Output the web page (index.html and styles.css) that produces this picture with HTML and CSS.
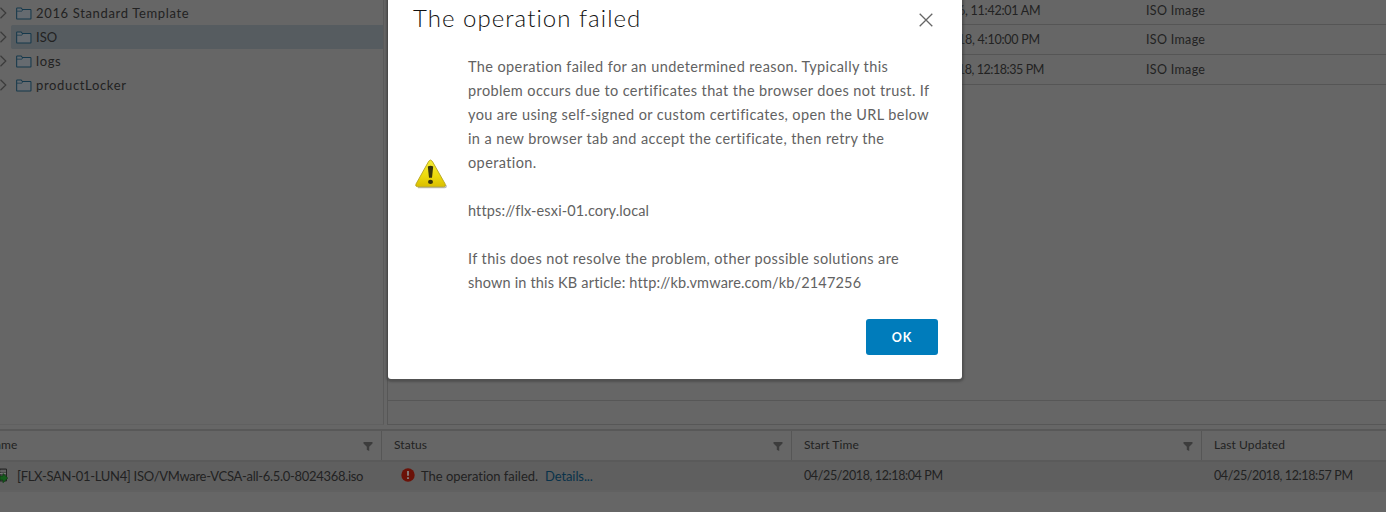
FILE: index.html
```html
<!DOCTYPE html>
<html lang="en">
<head>
<meta charset="utf-8">
<title>Datastore files</title>
<link rel="stylesheet" href="styles.css">
</head>
<body>
<svg class="defs" width="0" height="0">
  <symbol id="folder" viewBox="0 0 17 14"><path d="M.6 12.4V1.7q0-.6.6-.6h4.2l1.4 1.6h8.5q.7 0 .7.7v9q0 .6-.6.6H1.2q-.6 0-.6-.6z" fill="#666b70" stroke="#15384b" stroke-width="1.1"/><path d="M1 4.5h5.2l1-1.6" fill="none" stroke="#15384b" stroke-width=".8"/></symbol>
  <symbol id="caret" viewBox="0 0 7 12"><path d="M.5 .8L5.8 6 .5 11.2" fill="none" stroke="#3b3b3b" stroke-width="1.2"/></symbol>
  <symbol id="filter" viewBox="0 0 10 9"><path d="M.5 0h9v1.5L6.2 4.7V9L3.8 7.7v-3L.5 1.5z" fill="#3c3c3c"/></symbol>
</svg>
<div class="app">
  <div class="workspace">
    <nav class="tree">
      <div class="node"><svg class="caret"><use href="#caret"/></svg><div class="label"><svg class="folder"><use href="#folder"/></svg><span class="node-text">2016 Standard Template</span></div></div>
      <div class="node"><svg class="caret"><use href="#caret"/></svg><div class="label selected"><svg class="folder"><use href="#folder"/></svg><span>ISO</span></div></div>
      <div class="node"><svg class="caret"><use href="#caret"/></svg><div class="label"><svg class="folder"><use href="#folder"/></svg><span class="node-text">logs</span></div></div>
      <div class="node"><svg class="caret"><use href="#caret"/></svg><div class="label"><svg class="folder"><use href="#folder"/></svg><span class="node-text">productLocker</span></div></div>
    </nav>
    <main class="files">
      <div class="file-rows">
        <div class="file first"><span class="modified">6, 11:42:01 AM</span><span>ISO Image</span></div>
        <div class="file"><span class="modified">18, 4:10:00 PM</span><span>ISO Image</span></div>
        <div class="file"><span class="modified long">18, 12:18:35 PM</span><span>ISO Image</span></div>
      </div>
      <div class="files-footer"></div>
    </main>
  </div>
  <section class="tasks">
    <div class="row head">
      <div class="cell name"><span class="cut">Name</span><svg class="filter"><use href="#filter"/></svg></div>
      <div class="cell"><span>Status</span><svg class="filter"><use href="#filter"/></svg></div>
      <div class="cell"><span>Start Time</span><svg class="filter"><use href="#filter"/></svg></div>
      <div class="cell last"><span>Last Updated</span></div>
    </div>
    <div class="row data">
      <div class="cell name"><svg class="task-icon" viewBox="0 0 8 16"><path d="M0 1h6.5v12H0z" fill="#4a4a4a" stroke="#242424"/><path d="M0 3h6M0 5.5h6" stroke="#777"/><path d="M0 8h3V5.5L7.8 10 3 14.8V12H0z" fill="#155c1c" stroke="#0c3b11" stroke-width=".6"/></svg><span class="file-name">[FLX-SAN-01-LUN4] ISO/VMware-VCSA-all-6.5.0-8024368.iso</span></div>
      <div class="cell status"><svg class="error" viewBox="0 0 14 14"><circle cx="7" cy="7" r="6.7" fill="#6b1208"/><path d="M7 3v4.8M7 9.2v1.7" stroke="#8a8a8a" stroke-width="1.7"/></svg><span class="message">The operation failed.</span><a class="details">Details...</a></div>
      <div class="cell time">04/25/2018, 12:18:04 PM</div>
      <div class="cell last time">04/25/2018, 12:18:57 PM</div>
    </div>
  </section>
</div>
<div class="dialog">
  <header class="dialog-head"><h3>The operation failed</h3><svg class="close" viewBox="0 0 14 14"><path d="M.7.7l12.6 12.6M13.3.7L.7 13.3" stroke="#666" stroke-width="1.3"/></svg></header>
  <div class="dialog-body">
    <svg class="warning" viewBox="0 0 32 30"><defs><linearGradient id="gold" x2="0" y2="1"><stop offset="0" stop-color="#f5ed3a"/><stop offset=".6" stop-color="#ecd90b"/><stop offset="1" stop-color="#d9be00"/></linearGradient></defs><path d="M3 28.6h26.5q2.3-.3 1.2-2.4" fill="none" stroke="#bbb" stroke-width="1.5"/><path d="M13.7 2.3Q15.5-.2 17.3 2.3L30.2 25q1 2.6-1.8 2.8H2.7Q0 27.6 1 25z" fill="url(#gold)" stroke="#b7a51c" stroke-width=".9"/><path d="M12.8 7.5q2.7-1.5 5.4 0l-1.2 11.2h-3z" fill="#38340b"/><ellipse cx="15.5" cy="22.9" rx="2.5" ry="2.1" fill="#38340b"/></svg>
    <p>The operation failed for an undetermined reason. Typically this<br>problem occurs due to certificates that the browser does not trust. If<br>you are using self-signed or custom certificates, open the URL below<br>in a new browser tab and accept the certificate, then retry the<br>operation.<br><br><span class="url">https://flx-esxi-01.cory.local</span><br><br>If this does not resolve the problem, other possible solutions are<br><span class="article">shown in this KB article: http://kb.vmware.com/kb/2147256</span></p>
  </div>
  <footer class="dialog-foot"><button>OK</button></footer>
</div>
</body>
</html>
```
FILE: styles.css
```css
* { box-sizing: border-box; }
body { margin: 0; width: 1386px; height: 512px; overflow: hidden; background: #666; color: #222; font: 13px Lato, sans-serif; font-variant-ligatures: none; }
.defs { position: absolute; }
svg { display: block; flex: none; }
.app { height: 512px; display: flex; flex-direction: column; }
.workspace { height: 426px; display: flex; gap: 3px; }
.tree { width: 384px; height: 425px; border-right: 1px solid #5a5a5a; border-bottom: 1px solid #606060; padding-top: 1px; }
.node { height: 24px; display: flex; align-items: center; }
.node .caret { width: 7px; height: 12px; }
.label { flex: 1; height: 24px; margin-left: 4px; padding-left: 5px; display: flex; align-items: center; gap: 4px; border-radius: 2px 0 0 2px; }
.node-text { letter-spacing: .65px; }
.selected { background: #565c60; }
.folder { width: 16px; height: 13px; }
.files { flex: 1; height: 425px; border-left: 1px solid #575757; border-bottom: 1px solid #575757; display: flex; flex-direction: column; }
.file-rows { flex: 1; }
.file { height: 30px; border-bottom: 1px solid #555; display: flex; align-items: center; padding-left: 570px; font-size: 12.5px; letter-spacing: .32px; }
.file.first { height: 25px; padding-bottom: 4px; }
.file .modified { width: 188px; letter-spacing: -.25px; }
.file .long { letter-spacing: -.45px; }
.files-footer { height: 24px; border-top: 1px solid #575757; }
.tasks { border-top: 2px solid #585858; margin-top: 3px; }
.row { display: grid; grid-template-columns: 382px 410px 410px 184px; }
.cell { display: flex; align-items: center; padding-left: 12px; }
.head { height: 31px; border-bottom: 2px solid #5a5a5a; font-size: 12px; letter-spacing: .08px; }
.head .cell { justify-content: space-between; padding-right: 8px; padding-bottom: 2px; border-right: 1px solid #565656; }
.head .last { border-right: 0; }
.name.cell { padding-left: 0; }
.cut { margin-left: -14px; }
.filter { width: 10px; height: 9px; margin-top: 4px; }
.data { height: 30px; background: #5f5f5f; border-bottom: 2px solid #616161; }
.task-icon { width: 8px; height: 16px; margin-right: 9px; }
.file-name { letter-spacing: -.3px; }
.status.cell { padding-left: 19px; }
.error { width: 14px; height: 14px; margin: 0 6px 3px 0; }
.message { letter-spacing: -.03px; }
.details { color: #09324a; margin-left: 7px; letter-spacing: -.1px; }
.time { font-size: 12.5px; letter-spacing: -.38px; padding-bottom: 1px; }
.dialog { position: absolute; left: 388px; top: -24px; width: 574px; height: 403px; padding: 24px; background: #fff; border-radius: 3px; box-shadow: 0 1px 2px 2px #3c3c3c80; }
.dialog-head { height: 38px; display: flex; justify-content: space-between; align-items: center; }
h3 { margin: -2px 0 0 1px; color: #111; font: 300 24px/38px Lato, sans-serif; letter-spacing: 1.04px; white-space: nowrap; }
.close { width: 14px; height: 14px; margin: 1px 5px 0 0; }
.dialog-body { height: 240px; margin-top: 17px; display: flex; align-items: center; }
.warning { width: 32px; height: 30px; margin: 0 21px 2px 3px; }
p { margin: 0; color: #626262; font: 14.5px/24px Lato, sans-serif; white-space: nowrap; letter-spacing: .39px; }
.url { letter-spacing: .13px; }
.article { letter-spacing: .17px; }
.dialog-foot { margin-top: 24px; display: flex; justify-content: flex-end; }
button { width: 72px; height: 36px; border: 0; border-radius: 3px; background: #007cbb; color: #fff; font: 700 12.5px Lato, sans-serif; letter-spacing: .9px; }
```
